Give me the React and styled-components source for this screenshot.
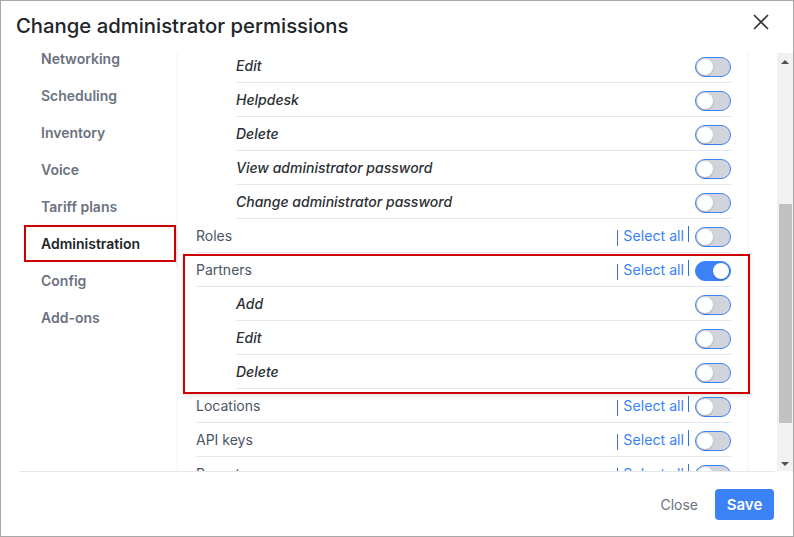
import React from "react";
import styled, { createGlobalStyle } from "styled-components";

const GlobalStyle = createGlobalStyle`
	html, body {
		margin: 0;
		padding: 0;
		background: #ffffff;
	}
	body {
		font-family: Inter, "Noto Sans", "Liberation Sans", sans-serif;
	}
	* {
		box-sizing: border-box;
	}
`;

const Modal = styled.div`
	width: 794px;
	height: 537px;
	border: 1px solid #a8a8a8;
	background: #ffffff;
	display: flex;
	flex-direction: column;
	overflow: hidden;
`;

const Header = styled.div`
	height: 39px;
	flex: none;
	display: flex;
	align-items: center;
	justify-content: space-between;
	padding: 9px 24px 0 15px;
`;

const Title = styled.h2`
	margin: 0;
	font-size: 20.3px;
	font-weight: 500;
	color: #212529;
`;

const CloseIcon = styled.button`
	border: none;
	background: none;
	padding: 0;
	width: 16px;
	height: 16px;
	display: flex;
	margin-top: -7px;
	cursor: pointer;
`;

const Body = styled.div`
	flex: 1;
	display: flex;
	min-height: 0;
`;

const Nav = styled.nav`
	width: 175px;
	flex: none;
	padding-left: 23px;
	display: flex;
	flex-direction: column;
`;

const NavItem = styled.div`
	height: 37px;
	display: flex;
	align-items: center;
	padding-left: 15px;
	font-size: 14px;
	font-weight: 600;
	color: ${({ $active }) => ($active ? "#212529" : "#6b7280")};
	background: #ffffff;
	border: 2px solid ${({ $active }) => ($active ? "#cc0000" : "transparent")};
	box-shadow: ${({ $active }) => ($active ? "2px 3px 6px rgba(0, 0, 0, 0.12)" : "none")};
`;

const ScrollArea = styled.div`
	flex: 1;
	display: flex;
	margin-top: 13px;
	min-width: 0;
`;

const Viewport = styled.div`
	flex: 1;
	overflow: hidden;
	padding: 0 30px 0 2px;
`;

const Panel = styled.div`
	background: #ffffff;
	box-shadow: 0 0 4px rgba(0, 0, 0, 0.08);
	padding: 0 16px 0 18px;
	margin-top: -4px;
`;

const Group = styled.div`
	position: relative;

	&::after {
		content: "";
		position: absolute;
		top: 1px;
		bottom: -5px;
		left: -13px;
		right: -19px;
		border: 2px solid #cc0000;
		box-shadow: 0 2px 5px rgba(0, 0, 0, 0.12);
		pointer-events: none;
	}
`;

const Row = styled.div`
	height: 34px;
	display: flex;
	align-items: center;
	border-bottom: 1px solid #e5e7eb;
	margin-left: ${({ $sub }) => ($sub ? "40px" : "0")};
`;

const Label = styled.span`
	flex: 1;
	font-size: 14px;
	font-style: ${({ $sub }) => ($sub ? "italic" : "normal")};
	font-weight: ${({ $sub }) => ($sub ? 500 : 400)};
	color: ${({ $sub }) => ($sub ? "#2b2f33" : "#4b5563")};
`;

const SelectAll = styled.span`
	display: flex;
	align-items: center;
	font-size: 14.2px;
	color: #3b82f6;
`;

const Bar = styled.span`
	width: 1px;
	height: 16px;
	background: #2f6fd6;
	margin: ${({ $up }) => ($up ? "0 6px 0 4px" : "0 5px 0 0")};
	transform: translateY(${({ $up }) => ($up ? "-2px" : "2px")});
`;

const Toggle = styled.span`
	width: 36px;
	height: 20px;
	border-radius: 10px;
	border: 1px solid #3b82f6;
	background: ${({ $on }) => ($on ? "#3b82f6" : "#d1d5db")};
	display: flex;
	align-items: center;
	justify-content: ${({ $on }) => ($on ? "flex-end" : "flex-start")};
	padding: 0 1px;
	margin-top: 2px;
	flex: none;

	&::before {
		content: "";
		width: 16px;
		height: 16px;
		border-radius: 50%;
		background: #ffffff;
		box-shadow: 0 1px 2px rgba(0, 0, 0, 0.2);
	}
`;

const Scrollbar = styled.div`
	width: 16px;
	flex: none;
	background: #f1f1f1;
	display: flex;
	flex-direction: column;
	align-items: center;
	padding: 7px 0 5px;
`;

const Thumb = styled.div`
	width: 13px;
	height: 219px;
	margin-top: 140px;
	background: #c1c1c1;
`;

const Arrow = styled.span`
	width: 0;
	height: 0;
	border-left: 4px solid transparent;
	border-right: 4px solid transparent;
	${({ $down }) =>
		$down ? "border-top: 4px solid #505050; margin-top: auto;" : "border-bottom: 4px solid #505050;"}
`;

const Footer = styled.div`
	height: 65px;
	flex: none;
	margin: 0 18px;
	border-top: 1px solid #e5e7eb;
	display: flex;
	align-items: flex-start;
	justify-content: flex-end;
	padding-top: 17px;
	gap: 17px;
`;

const TextButton = styled.button`
	border: none;
	background: none;
	padding: 0;
	height: 31px;
	font-family: inherit;
	font-size: 14px;
	color: #6b7280;
	cursor: pointer;
`;

const SaveButton = styled.button`
	border: none;
	background: #3b82f6;
	color: #ffffff;
	border-radius: 4px;
	width: 59px;
	height: 31px;
	font-family: inherit;
	font-size: 15px;
	font-weight: 600;
	cursor: pointer;
	margin-right: 1px;
`;

const navItems = ["Networking", "Scheduling", "Inventory", "Voice", "Tariff plans", "Administration", "Config", "Add-ons"];

const PermRow = ({ label, sub, all, on }) => (
	<Row $sub={sub}>
		<Label $sub={sub}>{label}</Label>
		{all && (
			<SelectAll>
				<Bar />
				Select all
				<Bar $up />
			</SelectAll>
		)}
		<Toggle $on={on} />
	</Row>
);

export default function App() {
	return (
		<>
			<GlobalStyle />
			<Modal>
				<Header>
					<Title>Change administrator permissions</Title>
					<CloseIcon aria-label='Close'>
						<svg width='16' height='16' viewBox='0 0 16 16'>
							<path d='M1 1 L15 15 M15 1 L1 15' stroke='#333' strokeWidth='1.6' fill='none' />
						</svg>
					</CloseIcon>
				</Header>
				<Body>
					<Nav>
						{navItems.map((n) => (
							<NavItem key={n} $active={n === "Administration"}>
								{n}
							</NavItem>
						))}
					</Nav>
					<ScrollArea>
						<Viewport>
							<Panel>
								<PermRow label='Edit' sub />
								<PermRow label='Helpdesk' sub />
								<PermRow label='Delete' sub />
								<PermRow label='View administrator password' sub />
								<PermRow label='Change administrator password' sub />
								<PermRow label='Roles' all />
								<Group>
									<PermRow label='Partners' all on />
									<PermRow label='Add' sub />
									<PermRow label='Edit' sub />
									<PermRow label='Delete' sub />
								</Group>
								<PermRow label='Locations' all />
								<PermRow label='API keys' all />
								<PermRow label='Reports' all />
								<PermRow label='Add' sub />
							</Panel>
						</Viewport>
						<Scrollbar>
							<Arrow />
							<Thumb />
							<Arrow $down />
						</Scrollbar>
					</ScrollArea>
				</Body>
				<Footer>
					<TextButton>Close</TextButton>
					<SaveButton>Save</SaveButton>
				</Footer>
			</Modal>
		</>
	);
}
